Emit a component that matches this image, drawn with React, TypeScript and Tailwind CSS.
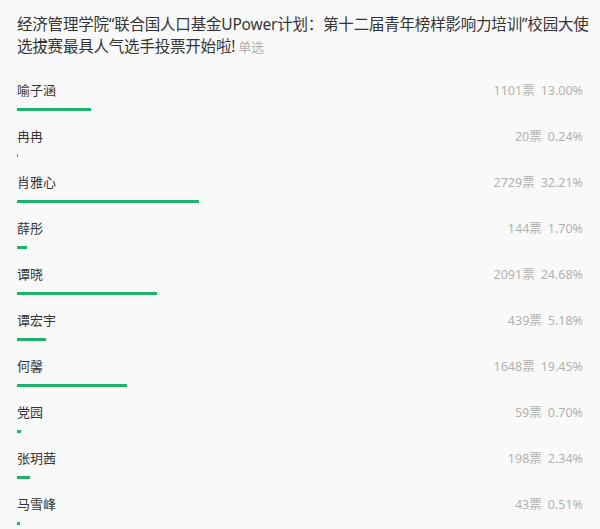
import * as React from "react"

// 投票选项数据
const options = [
  { name: "喻子涵", votes: 1101, pct: "13.00%" },
  { name: "冉冉", votes: 20, pct: "0.24%" },
  { name: "肖雅心", votes: 2729, pct: "32.21%" },
  { name: "薛彤", votes: 144, pct: "1.70%" },
  { name: "谭晓", votes: 2091, pct: "24.68%" },
  { name: "谭宏宇", votes: 439, pct: "5.18%" },
  { name: "何馨", votes: 1648, pct: "19.45%" },
  { name: "党园", votes: 59, pct: "0.70%" },
  { name: "张玥茜", votes: 198, pct: "2.34%" },
  { name: "马雪峰", votes: 43, pct: "0.51%" },
]

function VoteRow({ name, votes, pct }: { name: string; votes: number; pct: string }) {
  return (
    <div className="h-[46px]">
      <div className="flex items-center justify-between h-5">
        <span className="text-[13px] text-[#353535]">{name}</span>
        <span className="text-[12.5px] text-[#b2b2b2]">
          {votes}票<span className="ml-[6px]">{pct}</span>
        </span>
      </div>
      <div className="mt-[7px] h-[3px] w-full">
        <div className="h-full bg-[#1db46a]" style={{ width: pct }} />
      </div>
    </div>
  )
}

export default function App() {
  return (
    <div
      className="min-h-[529px] w-[600px] bg-[#f9f9f9] px-[17px] pt-[13px]"
      style={{ fontFamily: '"Noto Sans", "Noto Sans CJK SC", sans-serif' }}
    >
      {/* 标题 */}
      <h1 className="w-[583px] text-[15.5px] leading-[22px] tracking-[-0.2px] text-[#353535] font-normal">
        经济管理学院“联合国人口基金UPower计划：第十二届青年榜样影响力培训”校园大使选拔赛最具人气选手投票开始啦!
        <span className="ml-[3px] inline-block text-[13px] leading-[22px] text-[#b2b2b2]">单选</span>
      </h1>

      {/* 选项列表 */}
      <div className="mt-[23px]">
        {options.map((o) => (
          <VoteRow key={o.name} {...o} />
        ))}
      </div>
    </div>
  )
}
